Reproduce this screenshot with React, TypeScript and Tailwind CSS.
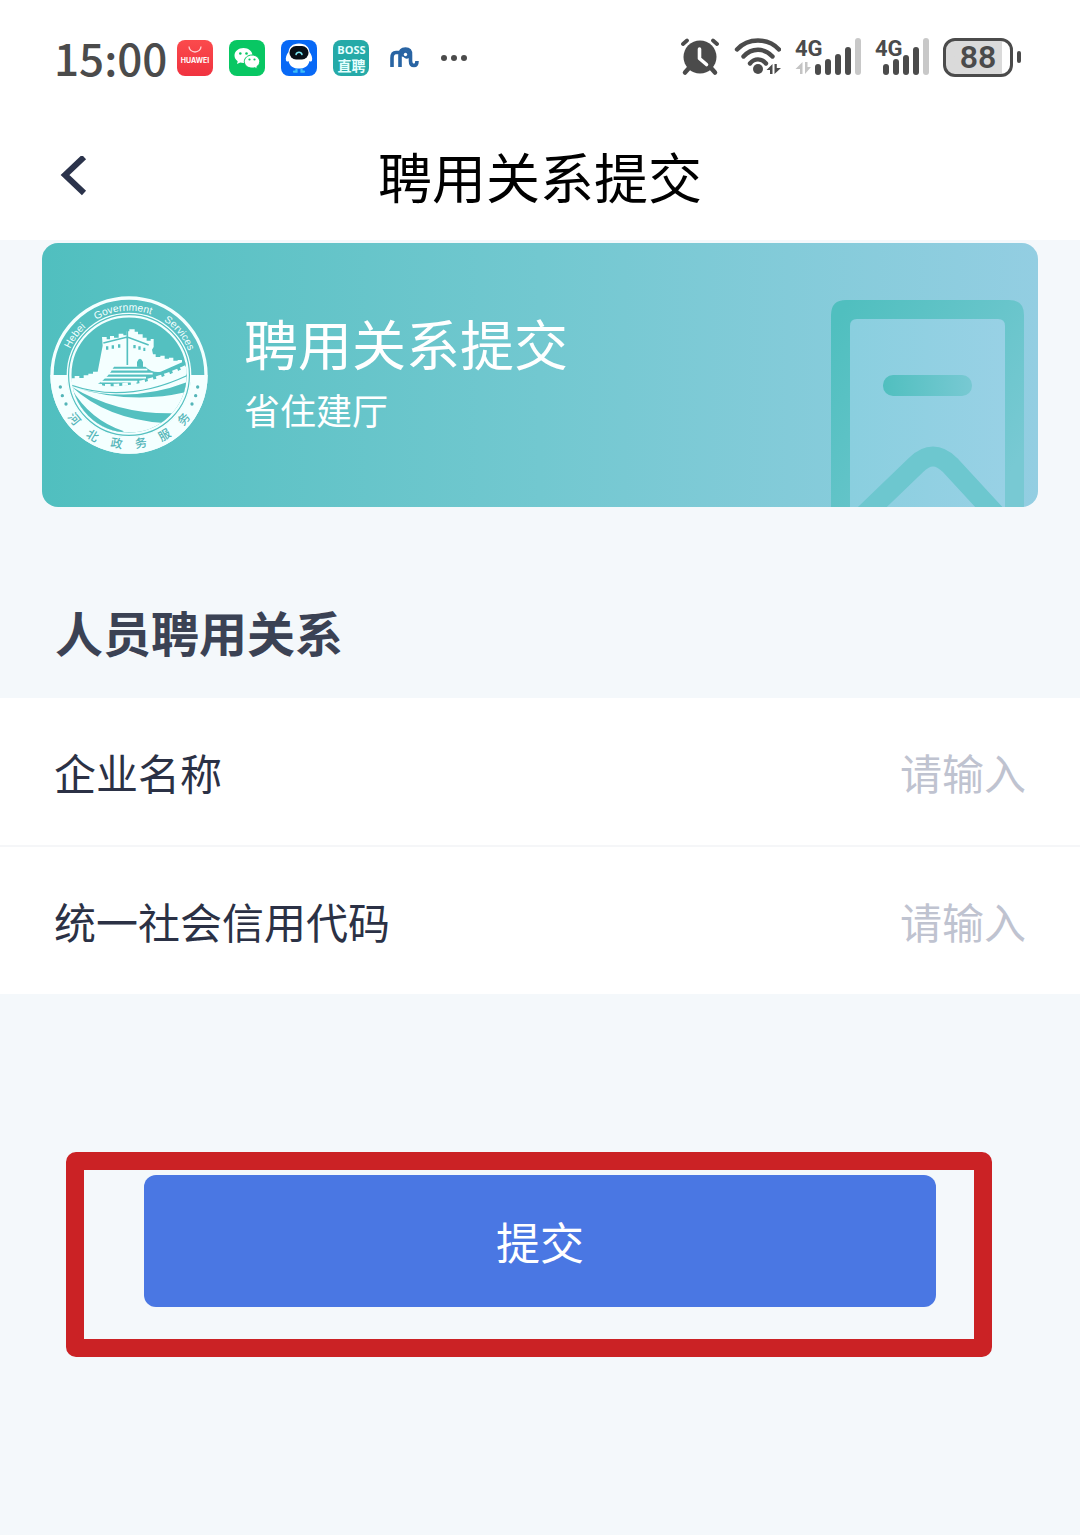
import React from 'react';

function HuaweiIcon() {
  return (
    <svg className="size-9" viewBox="0 0 36 36" role="img" aria-label="Huawei">
      <defs>
        <linearGradient id="hw" x1="0" y1="0" x2="0" y2="1">
          <stop offset="0" stopColor="#fb4a4c" />
          <stop offset="1" stopColor="#f03340" />
        </linearGradient>
      </defs>
      <rect width="36" height="36" rx="8" fill="url(#hw)" />
      <path d="M12 6.500a6 5.500 0 0 0 12 0" fill="none" stroke="#ffd0d0" strokeWidth="1.300" />
      <text x="18" y="23" textAnchor="middle" fontSize="7" fontWeight="700" fill="#fff" fontFamily="Inter, sans-serif">
        HUAWEI
      </text>
    </svg>
  );
}

function WechatIcon() {
  return (
    <svg className="size-9" viewBox="0 0 36 36" role="img" aria-label="WeChat">
      <rect width="36" height="36" rx="8" fill="#08c763" />
      <path d="M14.500 8C9.500 8 5.500 11.400 5.500 15.500c0 2.300 1.200 4.300 3.200 5.700L8 24l3.200-1.600c1 .3 2.100.5 3.300.5 5 0 9-3.300 9-7.400S19.500 8 14.500 8z" fill="#fff" />
      <path d="M23 15c-4.300 0-7.700 3-7.700 6.600s3.400 6.500 7.700 6.500c1 0 1.900-.2 2.800-.4l2.600 1.400-.6-2.400c1.800-1.200 2.900-3 2.900-5.100C30.700 18 27.300 15 23 15z" fill="#fff" stroke="#08c763" strokeWidth="1" />
      <g fill="#08c763">
        <circle cx="11.300" cy="13.500" r="1.300" />
        <circle cx="17.500" cy="13.500" r="1.300" />
        <circle cx="20.500" cy="19.500" r="1.100" />
        <circle cx="25.500" cy="19.500" r="1.100" />
      </g>
    </svg>
  );
}

function RobotIcon() {
  return (
    <svg className="size-9" viewBox="0 0 36 36" role="img" aria-label="Robot">
      <rect width="36" height="36" rx="8" fill="#0869f6" />
      <path d="M18 3.500C11.500 3.500 8 7 7.500 12 5.500 14.500 4.300 18 5 20.500c.4 1.200 1.600 1.100 2.500.4C8.500 26 12.500 28.500 18 28.500s9.500-2.500 10.500-7.600c.9.700 2.100.8 2.500-.4.700-2.500-.5-6-2.500-8.500C28 7 24.500 3.500 18 3.500z" fill="#fff" />
      <rect x="8.500" y="6" width="19" height="13.500" rx="6.500" fill="#081018" />
      <path d="M15 14.500c.8-3 5.200-3 6 0" fill="none" stroke="#7de8f4" strokeWidth="1.500" strokeLinecap="round" />
      <path d="M15.500 29.500v2.200H13M20.500 29.500v2.200H23" fill="none" stroke="#3bbcf8" strokeWidth="2.200" strokeLinecap="round" />
    </svg>
  );
}

function BossIcon() {
  return (
    <span className="flex size-9 flex-col items-center justify-center rounded-lg bg-[#25aaa8] font-bold text-[#e6ffff]">
      <span className="font-['Open_Sans',sans-serif] text-[11px] leading-[14px]">BOSS</span>
      <span className="text-[14px] leading-[16px]">直聘</span>
    </span>
  );
}

function ElephantIcon() {
  return (
    <svg className="h-9 w-[30px]" viewBox="0 0 30 36" aria-hidden="true">
      <g fill="none" stroke="#2964a3" strokeWidth="3.600">
        <path d="M3 27V18Q3 12.500 7 12.500H11" />
        <path d="M11 27V15Q11 9 16.500 9T21.500 15V21Q21.500 25.500 25 25.500 28 25.500 28 21" />
      </g>
      <path d="M12 12Q16 8 20 12V18Q17 20 14.500 17L11 16z" fill="#2964a3" />
      <circle cx="16.500" cy="14.500" r="1.700" fill="#fff" />
    </svg>
  );
}

function AlarmIcon() {
  return (
    <svg className="h-10 w-10" viewBox="0 0 40 40" role="img" aria-label="闹钟">
      <g stroke="#4b4b4b" strokeLinecap="round">
        <path d="M4 7l4-3.500M38 7l-4-3.500" strokeWidth="3.800" />
        <path d="M10 31l-4 4.500M32 31l4 4.500" strokeWidth="4.500" />
      </g>
      <circle cx="21" cy="20" r="16.500" fill="#4b4b4b" />
      <path d="M20.500 12v9.500l7 6" fill="none" stroke="#fff" strokeWidth="3.600" strokeLinecap="round" strokeLinejoin="round" />
    </svg>
  );
}

function WifiIcon() {
  return (
    <svg className="h-10 w-12" viewBox="0 0 48 40" role="img" aria-label="无线网络">
      <g fill="none" stroke="#4b4b4b" strokeWidth="4.400" strokeLinecap="round">
        <path d="M4 12.500C15 .5 35 .5 46 12.500" />
        <path d="M10.500 19.500c8-9 21-9 29 0" />
        <path d="M17 26.500c4.500-5.500 11.500-5.500 16 0" />
      </g>
      <circle cx="25" cy="32" r="5" fill="#4b4b4b" />
      <path d="M39.500 27V37h-2.500v-4H33.500zM41.500 37V27h2.300v4H48z" fill="#4b4b4b" />
    </svg>
  );
}

function SignalText() {
  return (
    <text x="0" y="19" fontSize="22" fontWeight="700" fill="#4b4b4b" fontFamily="Roboto, sans-serif">
      4G
    </text>
  );
}

function SignalOne() {
  return (
    <svg className="h-10 w-[66px] overflow-visible" viewBox="0 0 66 40" role="img" aria-label="4G信号一">
      <SignalText />
      <path d="M7.500 25V37H5v-5H.5zM10 37V25h2.500v5H16z" fill="#c4c4c4" />
      <g fill="#4b4b4b">
        <rect x="20" y="27" width="6" height="11" rx="3" />
        <rect x="30" y="22" width="6" height="16" rx="3" />
        <rect x="40" y="17" width="6" height="21" rx="3" />
        <rect x="50" y="10" width="6" height="28" rx="3" />
      </g>
      <rect x="60" y="1" width="6" height="37" rx="3" fill="#c8c8c8" />
    </svg>
  );
}

function SignalTwo() {
  return (
    <svg className="h-10 w-[54px] overflow-visible" viewBox="0 0 54 40" role="img" aria-label="4G信号二">
      <SignalText />
      <g fill="#4b4b4b">
        <rect x="8" y="27" width="6" height="11" rx="3" />
        <rect x="18" y="22" width="6" height="16" rx="3" />
        <rect x="28" y="18" width="6" height="20" rx="3" />
        <rect x="38" y="10" width="6" height="28" rx="3" />
      </g>
      <rect x="48" y="1" width="6" height="37" rx="3" fill="#c8c8c8" />
    </svg>
  );
}

function Battery() {
  return (
    <div className="flex items-center gap-1">
      <span className="flex h-[39px] w-[70px] items-center justify-center rounded-xl border-[3px] border-[#4b4b4b] bg-linear-to-r from-[#dadada] from-88% to-white to-88% font-['Roboto',sans-serif] text-[32px] leading-[32px] font-semibold text-[#4b4b4b]">
        88
      </span>
      <span className="h-3 w-1 rounded-xs bg-[#4b4b4b]" />
    </div>
  );
}

const sealChars = [
  { c: '河', x: 103, y: 400, r: 51 },
  { c: '北', x: 158, y: 450, r: 31 },
  { c: '政', x: 230, y: 473, r: 10 },
  { c: '务', x: 303, y: 472, r: -10 },
  { c: '服', x: 373, y: 448, r: -31 },
  { c: '务', x: 431, y: 400, r: -51 },
];

function Seal() {
  return (
    <svg className="size-[158px] shrink-0" viewBox="30 31 474 474" role="img" aria-label="河北政务服务">
      <defs>
        <path id="sealArc" d="M74 268A193 193 0 0 1 460 268" />
        <clipPath id="sealInner">
          <circle cx="267" cy="268" r="173" />
        </clipPath>
      </defs>
      <circle cx="267" cy="268" r="231" fill="none" stroke="#f4ffff" strokeWidth="10" />
      <path d="M31 268A236 236 0 0 0 503 268H450A183 183 0 0 1 84 268z" fill="#f4ffff" />
      <circle cx="267" cy="268" r="186" fill="#54c0c0" />
      <circle cx="267" cy="268" r="185" fill="none" stroke="#f4ffff" strokeWidth="4" />
      <circle cx="267" cy="268" r="176" fill="none" stroke="#f4ffff" strokeWidth="7" />
      <g fill="#f4ffff" fontSize="31" fontFamily="'Liberation Sans', sans-serif" textAnchor="middle">
        <text><textPath href="#sealArc" startOffset="20%">Hebei</textPath></text>
        <text><textPath href="#sealArc" startOffset="47%">Government</textPath></text>
        <text><textPath href="#sealArc" startOffset="78%">Services</textPath></text>
      </g>
      <g clipPath="url(#sealInner)">
        <path
          d="M80 278h24v-7h14v6h13v-8h14v-5h14v-6h14l15-78-2-26h14v7h10v-10h12v5h14v-12h14v5h10v-12h8v-6h16v7h10v8h14v10h12v9h12v-5h9v24l-5 8 3 14h8v8h14v-4h13v9h13v-3h13v9h13v-2h13v8h12v40L440 440H90z"
          fill="#f4ffff"
        />
        <path d="M262 134v104M190 172l72-18 64 24" fill="none" stroke="#54c0c0" strokeWidth="5" />
        <g fill="#54c0c0">
          <path d="M198 182h7v10h-7zM215 179h7v10h-7zM234 176h7v10h-7zM280 178h7v10h-7zM295 182h7v10h-7zM310 186h6v10h-6z" />
          <path d="M291 243v-14q9-20 18 0v16z" />
          <path d="M222 243H316Q336 262 362 258L440 224V246Q340 288 260 302 210 308 172 296 206 274 222 243z" />
        </g>
        <path
          d="M216 252H322M206 264H338M194 276H318M182 288H292"
          stroke="#f4ffff" strokeWidth="5" fill="none"
        />
        <path d="M92 298Q260 340 445 252" fill="none" stroke="#f4ffff" strokeWidth="18" />
        <path d="M92 286Q260 328 445 239" fill="none" stroke="#f4ffff" strokeWidth="9" strokeDasharray="17 9" />
        <path d="M92 298Q260 356 445 268" fill="none" stroke="#54c0c0" strokeWidth="4" />
        <g fill="#54c0c0">
          <path d="M95 303Q270 356 440 290L436 320Q270 358 95 303z" />
          <path d="M95 303Q230 385 396 383L372 412Q200 400 95 303z" />
          <path d="M94 308Q150 404 252 437L216 450 90 380z" />
        </g>
      </g>
      <g fill="#54b5b8">
        <g fontSize="36" textAnchor="middle" fontFamily="'Noto Sans CJK SC', sans-serif" fontWeight="500">
          {sealChars.map((s, i) => (
            <text key={i} transform={`translate(${s.x} ${s.y}) rotate(${s.r})`} y="13">
              {s.c}
            </text>
          ))}
        </g>
        {[[61, 304], [67, 330], [78, 355], [473, 304], [467, 330], [456, 355]].map(([x, y]) => (
          <circle key={`${x}-${y}`} cx={x} cy={y} r="5" />
        ))}
      </g>
    </svg>
  );
}

function BookmarkArt() {
  return (
    <svg className="h-[207px] w-[193px] shrink-0 self-end" viewBox="0 0 193 207" aria-hidden="true">
      <defs>
        <linearGradient id="frame" gradientUnits="userSpaceOnUse" x1="0" y1="30" x2="193" y2="150">
          <stop offset="0" stopColor="#50bfbf" />
          <stop offset="1" stopColor="#78c9d3" />
        </linearGradient>
        <linearGradient id="dash" x1="0" y1="0" x2="1" y2="0">
          <stop offset="0" stopColor="#50bfbf" />
          <stop offset="1" stopColor="#78c9d3" />
        </linearGradient>
        <linearGradient id="pane" x1="0" y1="0" x2="1" y2="0">
          <stop offset="0" stopColor="#8acfdf" />
          <stop offset="1" stopColor="#98d1e5" />
        </linearGradient>
      </defs>
      <path d="M0 207V15Q0 0 15 0H178Q193 0 193 15V207z" fill="url(#frame)" />
      <path d="M19 207V26Q19 19 26 19H167Q174 19 174 26V207z" fill="url(#pane)" />
      <rect x="52" y="75" width="89" height="21" rx="10" fill="url(#dash)" />
      <path d="M31 217L85 165Q102 148 119 165L167 217" fill="none" stroke="#6dc7cf" strokeWidth="20" />
    </svg>
  );
}

function Field({ id, label }: { id: string; label: string }) {
  return (
    <div className="box-content flex h-[147px] items-center bg-white px-[54px] text-[42px] leading-[60px]">
      <label htmlFor={id} className="shrink-0 text-[#2b3145]">{label}</label>
      <input
        id={id}
        type="text"
        placeholder="请输入"
        className="min-w-0 flex-1 bg-transparent text-right text-[#2b3145] outline-none placeholder:text-[#bfc3d0]"
      />
    </div>
  );
}

export default function App() {
  return (
    <div className="min-h-screen bg-[#f4f8fb] font-['Noto_Sans_CJK_SC',sans-serif]">
      <div className="flex h-[116px] items-center justify-between bg-white pr-[59px] pl-[54px]">
        <div className="flex items-center gap-4">
          <span className="-mr-1.5 pb-0.5 text-[44px] leading-[60px] font-medium text-[#4b4b4b]">15:00</span>
          <HuaweiIcon />
          <WechatIcon />
          <RobotIcon />
          <BossIcon />
          <span className="ml-1 flex items-center gap-[22px]">
            <ElephantIcon />
            <svg className="h-2 w-[26px]" viewBox="0 0 26 8" fill="#4b4b4b" aria-hidden="true">
              <circle cx="3" cy="4" r="3" />
              <circle cx="13" cy="4" r="3" />
              <circle cx="23" cy="4" r="3" />
            </svg>
          </span>
        </div>
        <div className="flex items-center gap-[14px] pb-0.5">
          <AlarmIcon />
          <WifiIcon />
          <SignalOne />
          <SignalTwo />
          <Battery />
        </div>
      </div>

      <header className="grid h-[124px] grid-cols-[1fr_auto_1fr] items-center bg-white px-[54px] pb-1">
        <button type="button" aria-label="返回" className="flex size-10 items-center justify-center">
          <svg className="size-10" viewBox="0 0 40 40" aria-hidden="true">
            <path d="M30 1L11 19L30 37" fill="none" stroke="#2b334b" strokeWidth="6" />
          </svg>
        </button>
        <h1 className="text-[54px] leading-[80px] text-black">聘用关系提交</h1>
      </header>

      <main>
        <div className="px-[42px] pt-[3px]">
          <section className="flex h-[264px] items-center overflow-hidden rounded-2xl bg-linear-to-r from-[#50bfbf] via-[#72c8d0] to-[#93cee2] pr-[14px] pl-2 text-white">
            <Seal />
            <div className="ml-9 flex-1 pb-2.5">
              <h2 className="text-[54px] leading-[78px]">聘用关系提交</h2>
              <p className="text-[36px] leading-[54px]">省住建厅</p>
            </div>
            <BookmarkArt />
          </section>
        </div>

        <h2 className="px-[55px] pt-[89px] pb-8 text-[48px] leading-[70px] font-bold text-[#3b4254]">人员聘用关系</h2>

        <form onSubmit={(e) => e.preventDefault()}>
          <div className="flex flex-col divide-y-2 divide-[#f5f6f8]">
            <Field id="company" label="企业名称" />
            <Field id="credit" label="统一社会信用代码" />
          </div>
          <div className="mt-[158px] mr-[88px] ml-[66px] rounded-[10px] border-[18px] border-[#cb2225] pt-[5px] pr-[38px] pb-8 pl-[60px]">
            <button type="submit" className="h-[132px] w-full rounded-xl bg-[#4a77e3] text-[44px] leading-[64px] text-white">
              提交
            </button>
          </div>
        </form>
      </main>
    </div>
  );
}
